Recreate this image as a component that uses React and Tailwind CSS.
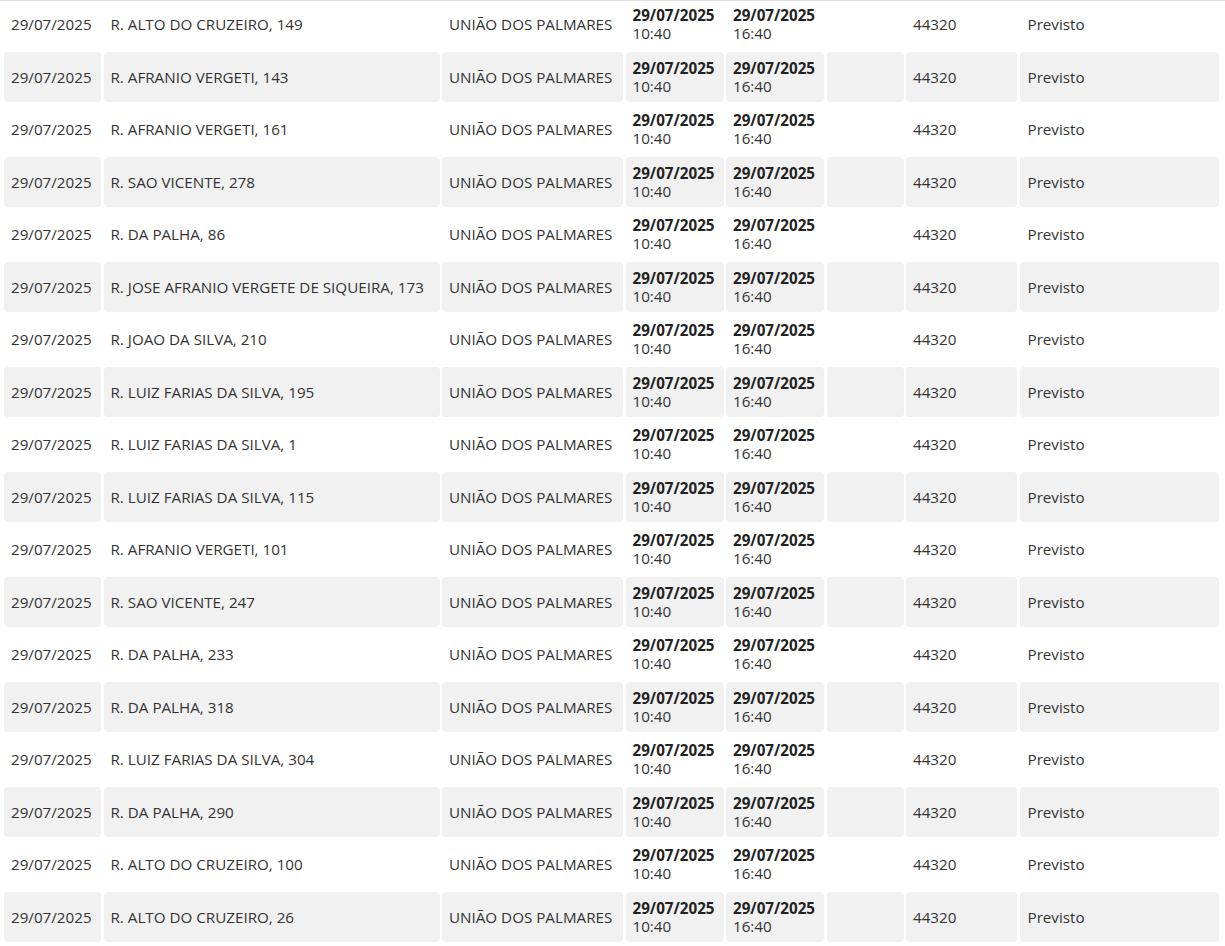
import React from "react";

const ruas = [
  "R. ALTO DO CRUZEIRO, 149",
  "R. AFRANIO VERGETI, 143",
  "R. AFRANIO VERGETI, 161",
  "R. SAO VICENTE, 278",
  "R. DA PALHA, 86",
  "R. JOSE AFRANIO VERGETE DE SIQUEIRA, 173",
  "R. JOAO DA SILVA, 210",
  "R. LUIZ FARIAS DA SILVA, 195",
  "R. LUIZ FARIAS DA SILVA, 1",
  "R. LUIZ FARIAS DA SILVA, 115",
  "R. AFRANIO VERGETI, 101",
  "R. SAO VICENTE, 247",
  "R. DA PALHA, 233",
  "R. DA PALHA, 318",
  "R. LUIZ FARIAS DA SILVA, 304",
  "R. DA PALHA, 290",
  "R. ALTO DO CRUZEIRO, 100",
  "R. ALTO DO CRUZEIRO, 26",
];

const Cell = ({ children, shade }) => (
  <div
    className={`flex h-[50px] items-center rounded-[4px] pl-[7px] ${
      shade ? "bg-[#f1f1f1]" : ""
    }`}
  >
    {children}
  </div>
);

const DateTime = ({ date, time }) => (
  <div className="leading-[18px]">
    <div className="font-bold text-[#222]">{date}</div>
    <div>{time}</div>
  </div>
);

export default function App() {
  return (
    <div className="min-h-screen bg-white font-['Open_Sans',sans-serif] text-[15.2px] text-[#333]">
      <div className="h-px bg-[#dedede]" />
      {/* Lista de desligamentos */}
      <div className="-mt-[2px] flex flex-col gap-[2.5px] pl-[4px]">
        {ruas.map((rua, i) => {
          const shade = i % 2 === 1;
          return (
            <div
              key={i}
              className="grid grid-cols-[97px_336px_181px_98px_98px_77px_111px_199px] gap-x-[2.5px] leading-[18px]"
            >
              <Cell shade={shade}>29/07/2025</Cell>
              <Cell shade={shade}>{rua}</Cell>
              <Cell shade={shade}>UNIÃO DOS PALMARES</Cell>
              <Cell shade={shade}>
                <DateTime date="29/07/2025" time="10:40" />
              </Cell>
              <Cell shade={shade}>
                <DateTime date="29/07/2025" time="16:40" />
              </Cell>
              <Cell shade={shade} />
              <Cell shade={shade}>44320</Cell>
              <Cell shade={shade}>
                <span className="pl-px">Previsto</span>
              </Cell>
            </div>
          );
        })}
      </div>
    </div>
  );
}
